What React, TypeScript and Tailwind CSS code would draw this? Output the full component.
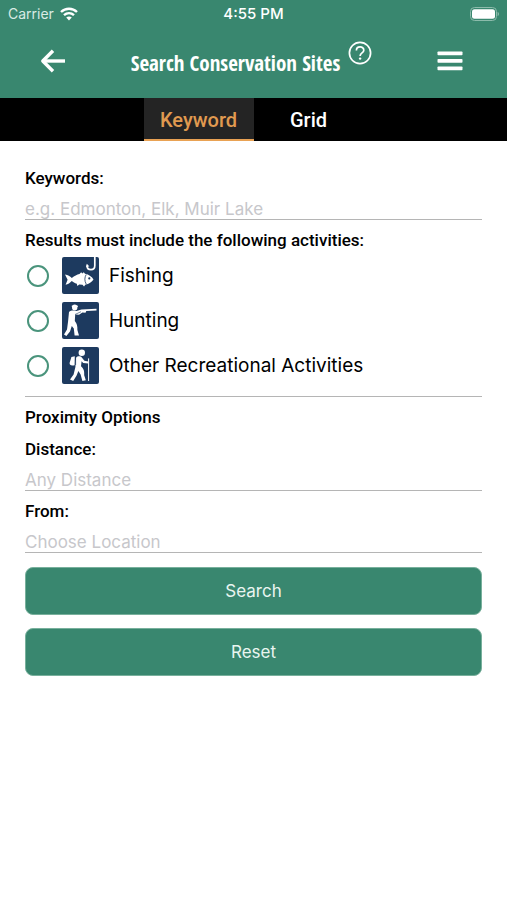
import { useState } from "react";

interface FieldProps {
    id: string,
    label: string,
    children: any
}

interface ActivityProps {
    id: string,
    label: string,
    icon: any
}

function WifiIcon() {
    return (
        <svg width="18" height="14" viewBox="0 0 18 14" fill="none" stroke="white" strokeWidth="2.4">
            <path d="M1 5 C5.5 0.7 12.5 0.7 17 5" />
            <path d="M4 8.2 C7 5.4 11 5.4 14 8.2" />
            <path d="M9 13.6 L6.2 10.6 C7.8 9.2 10.2 9.2 11.8 10.6 Z" fill="white" stroke="none" />
        </svg>
    )
}

function BatteryIcon() {
    return (
        <svg width="30" height="14" viewBox="0 0 30 14">
            <rect x="1.5" y="0.5" width="26" height="13" rx="4" fill="none" stroke="#8cbbab" />
            <rect x="3" y="2.2" width="23" height="9.6" rx="2.5" fill="white" />
            <path d="M28.6 4.8 C30.4 5.6 30.4 8.4 28.6 9.2 Z" fill="#8cbbab" />
        </svg>
    )
}

function BackIcon() {
    return (
        <svg width="26" height="24" viewBox="0 0 26 24" fill="none" stroke="white" strokeWidth="3.4">
            <path d="M2.5 12 H25" />
            <path d="M13 1.8 L2.8 12 L13 22.2" strokeLinejoin="round" />
        </svg>
    )
}

function HelpIcon() {
    return (
        <svg width="24" height="24" viewBox="0 0 24 24" fill="none" stroke="white">
            <circle cx="12" cy="12" r="10.6" strokeWidth="1.7" />
            <path d="M8.4 9.4 C8.4 4.8 15.8 4.8 15.8 9.2 C15.8 12 12.1 11.9 12.1 15" strokeWidth="1.7" />
            <circle cx="12.1" cy="17.6" r="1.2" fill="white" stroke="none" />
        </svg>
    )
}

function MenuIcon() {
    return (
        <svg width="26" height="20" viewBox="0 0 26 20" fill="white">
            <rect x="0.5" y="0.5" width="25" height="3.8" rx="0.8" />
            <rect x="0.5" y="8" width="25" height="3.8" rx="0.8" />
            <rect x="0.5" y="15.5" width="25" height="3.8" rx="0.8" />
        </svg>
    )
}

function FishingIcon() {
    return (
        <svg width="37" height="37" viewBox="0 0 37 37">
            <rect width="37" height="37" rx="2" fill="#1d3a5f" />
            <path d="M32.8 0 V8.5 C32.8 14 25.2 14 25 8.6" fill="none" stroke="white" strokeWidth="1.7" />
            <path d="M24 9.8 L24.8 6.8 L27.4 9.4 Z" fill="white" />
            <path d="M3 17.6 C6 18.2 8 19.3 9.8 21 C12.5 19 15 17.6 17.5 17 L19.2 15.2 L20.3 16.6 L21.8 15.2 L23 16.7 C27 17.5 30 19.8 31.5 22.5 C29.8 25.2 27 27 23.5 27.6 L22 29.4 L20.5 27.8 L17.2 27.6 L15.4 29 L14.8 26.8 C12.8 26 11 25 9.8 24 C8 26 6 27.2 3.6 27.8 L5.6 22.8 Z" fill="white" />
            <path d="M24.2 17.5 C22.4 20.4 22.4 24 24.2 27" fill="none" stroke="#1d3a5f" strokeWidth="0.8" />
            <circle cx="27.3" cy="21.4" r="1.1" fill="#1d3a5f" />
        </svg>
    )
}

function HuntingIcon() {
    return (
        <svg width="37" height="37" viewBox="0 0 37 37">
            <rect width="37" height="37" rx="2" fill="#1d3a5f" />
            <ellipse cx="12.7" cy="5.4" rx="2.7" ry="3" fill="white" />
            <path d="M9.8 4.3 H15.8" stroke="white" strokeWidth="1.4" />
            <path d="M7 10 C9 8 12 8.2 14.5 9 L19.5 7.4 L34.5 6.8 V8.4 L24.3 9 L23.5 10.7 L20.4 10.4 L17 12.8 L13.2 12.6 L12.8 19 C15 21.5 15.5 24 15.4 28 L17 33.4 H12.6 L11.8 26.5 L9.8 24 L8 29.5 L4.4 34 L2 32.6 L5 27.5 L6 20 Z" fill="white" />
            <path d="M13 12.5 L19 9.7" stroke="#1d3a5f" strokeWidth="0.6" />
        </svg>
    )
}

function HikingIcon() {
    return (
        <svg width="37" height="37" viewBox="0 0 37 37" fill="none" stroke="white">
            <rect width="37" height="37" rx="2" fill="#1d3a5f" stroke="none" />
            <circle cx="19.8" cy="5.8" r="3.2" fill="white" stroke="none" />
            <path d="M12.8 9.2 L9.4 10 L7.6 16 C7.4 18.2 9 18.8 12.6 18.2 Z" fill="white" stroke="none" />
            <path d="M14 11 C14.4 9 18.6 8.8 19.8 10.4 L22.4 13.8 L26.4 14.4 V16.6 L21.2 16 L19.6 14.2 L19 19.2 C22 22 22.4 24 22.2 28.2 L23.8 33.2 L20.4 34 L18.6 27.6 L16.4 24 L14.6 28.5 L11.2 34 L8 32.4 L11.6 27.4 L13.4 20 Z" fill="white" stroke="none" />
            <path d="M13.6 9.6 V18" stroke="#1d3a5f" strokeWidth="0.7" />
            <path d="M26.6 11.4 V34" strokeWidth="1" />
        </svg>
    )
}

const activities = [
    { id: "fishing", label: "Fishing", icon: <FishingIcon /> },
    { id: "hunting", label: "Hunting", icon: <HuntingIcon /> },
    { id: "other", label: "Other Recreational Activities", icon: <HikingIcon /> },
]

const inputStyle = "block w-full h-[26px] pt-1 appearance-none rounded-none border-b border-[#b5b5b5] bg-transparent text-[17px] text-black placeholder:text-[#c7c7cb] font-['Inter',sans-serif] outline-none"
const buttonStyle = "w-full h-12 pt-0.5 rounded-lg border border-[#78b09c] bg-[#39876f] text-[17px] text-[#e9f5f0] font-['Inter',sans-serif] cursor-pointer"
const tabStyle = "w-[110px] pt-0.5 border-b-2 cursor-pointer"
const activeTab = "border-[#e9a254] bg-[#242424] text-[#e09a50]"
const inactiveTab = "border-black text-white"

function Field({ id, label, children }: FieldProps) {
    return (
        <div className="pt-1">
            <label htmlFor={id} className="block text-[17px] leading-8 font-medium">{label}</label>
            {children}
        </div>
    )
}

function Activity({ id, label, icon }: ActivityProps) {
    return (
        <div className="flex items-center h-[45px]">
            <input id={id} type="checkbox" className="appearance-none size-[22px] ml-0.5 rounded-full border-2 border-[#4a947c] checked:bg-[#39876f]" />
            <label htmlFor={id} className="flex items-center gap-2.5 pl-[13px] text-[19px] leading-7 font-['Inter',sans-serif]">
                {icon}
                {label}
            </label>
        </div>
    )
}

export default function App() {
    const [tab, setTab] = useState("keyword")

    return (
        <div className="min-h-screen bg-white text-black font-['Roboto',sans-serif]">
            <header className="bg-[#39876f] text-white">
                <div className="grid grid-cols-3 items-center h-7 px-2 text-sm font-['Inter',sans-serif]">
                    <div className="flex items-center gap-1.5 text-[#d9ebe4]">
                        Carrier
                        <WifiIcon />
                    </div>
                    <div className="text-center text-[15px] font-medium">4:55 PM</div>
                    <div className="flex justify-end"><BatteryIcon /></div>
                </div>
                <div className="flex items-center justify-between h-[70px] px-10 pb-1">
                    <button aria-label="Back" className="cursor-pointer"><BackIcon /></button>
                    <div className="flex items-start gap-2 pb-1">
                        <h1 className="pt-2 text-[21px] leading-7 font-bold font-['Open_Sans_Condensed','Roboto',sans-serif]">Search Conservation Sites</h1>
                        <button aria-label="Help" className="cursor-pointer"><HelpIcon /></button>
                    </div>
                    <button aria-label="Menu" className="mr-1 cursor-pointer"><MenuIcon /></button>
                </div>
            </header>

            <nav className="flex justify-center h-[43px] bg-black text-xl font-medium">
                <button onClick={() => setTab("keyword")} className={`${tabStyle} ${tab == "keyword" ? activeTab : inactiveTab}`}>Keyword</button>
                <button onClick={() => setTab("grid")} className={`${tabStyle} ${tab == "grid" ? activeTab : inactiveTab}`}>Grid</button>
            </nav>

            <form className="px-[25px] pt-[17px]" onSubmit={(e) => e.preventDefault()}>
                <Field id="keywords" label="Keywords:">
                    <input id="keywords" type="text" placeholder="e.g. Edmonton, Elk, Muir Lake" className={inputStyle} />
                </Field>

                <fieldset className="pb-2 border-b border-[#b5b5b5]">
                    <legend className="pt-2 text-[17px] leading-[25px] font-medium">Results must include the following activities:</legend>
                    {activities.map((a) => <Activity key={a.id} id={a.id} label={a.label} icon={a.icon} />)}
                </fieldset>

                <h2 className="pt-2 text-[17px] leading-6 font-medium">Proximity Options</h2>
                <Field id="distance" label="Distance:">
                    <input id="distance" type="text" placeholder="Any Distance" className={inputStyle} />
                </Field>
                <Field id="from" label="From:">
                    <input id="from" type="text" placeholder="Choose Location" className={inputStyle} />
                </Field>

                <div className="flex flex-col gap-[13px] pt-3.5">
                    <button type="submit" className={buttonStyle}>Search</button>
                    <button type="reset" className={buttonStyle}>Reset</button>
                </div>
            </form>
        </div>
    )
}
